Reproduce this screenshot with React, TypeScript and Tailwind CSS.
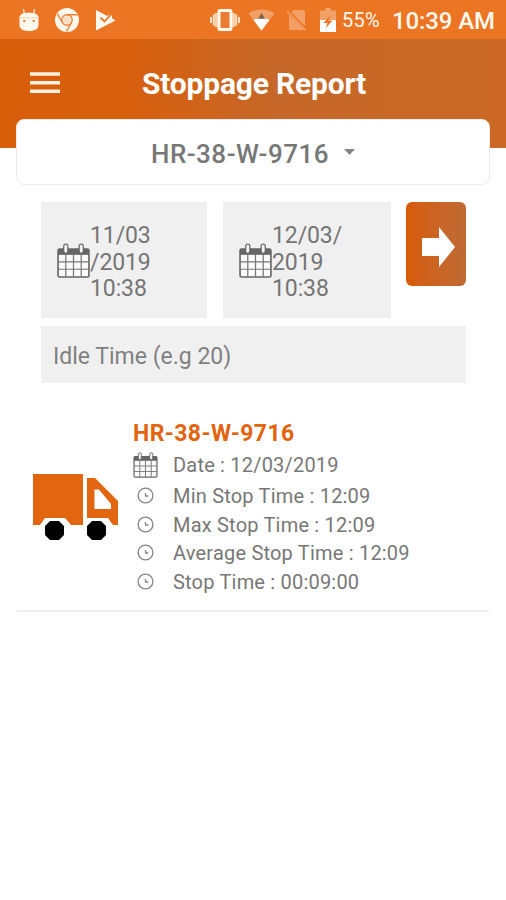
import { Fragment } from 'react'

const details = [
  { label: 'Min Stop Time', value: '12:09' },
  { label: 'Max Stop Time', value: '12:09' },
  { label: 'Average Stop Time', value: '12:09' },
  { label: 'Stop Time', value: '00:09:00' },
]

function AndroidIcon() {
  return (
    <svg width="22" height="24" viewBox="0 0 22 24" fill="#fff8ee">
      <path d="M5.500 1.500l.8 4M16.500 1.500l-.8 4" stroke="#fbd3b0" strokeWidth="1.600" strokeLinecap="round" />
      <path d="M1.500 8.500C3 5.700 6 4.800 11 4.800s8 .9 9.500 3.700V17c0 3.800-3 6-9.500 6s-9.500-2.200-9.500-6z" />
      <path d="M1.500 9.800h19" stroke="#f8c79d" strokeWidth=".8" />
      <circle cx="6.300" cy="13" r="1.200" fill="#e8833b" />
      <circle cx="15.700" cy="13" r="1.200" fill="#e8833b" />
    </svg>
  )
}

function ChromeIcon() {
  return (
    <svg width="24" height="24" viewBox="0 0 24 24">
      <circle cx="12" cy="12" r="12" fill="#fff8ee" />
      <g fill="none" stroke="#ec8239" strokeWidth="1.400">
        <circle cx="12" cy="12" r="5.200" />
        <path d="M12 6.800H22.500M7.500 14.600L2.300 5.600M16.500 14.600L11.300 23.500" />
      </g>
      <circle cx="12" cy="12" r="3.600" fill="#fbdcc0" />
    </svg>
  )
}

function PlayCheckIcon() {
  return (
    <svg width="21" height="22" viewBox="0 0 21 22">
      <path d="M1 1l9 4.800L12 7l3.500-2 1.500 1.500v2.800l3.500 2.200L1 21.500z" fill="#fff8ee" />
      <path d="M5.500 8.500l4 4 7.500-8" fill="none" stroke="#ec7524" strokeWidth="1.800" />
    </svg>
  )
}

function VibrateIcon() {
  return (
    <svg width="30" height="24" viewBox="0 0 30 24">
      <path d="M1 9v6M3.800 6.500v11M26.200 6.500v11M29 9v6" stroke="#fde3cb" strokeWidth="2" />
      <path d="M6.200 5v14M23.800 5v14" stroke="#fbd0a8" strokeWidth="3" />
      <rect x="9" y="2.500" width="12" height="19" rx="1" fill="#e97d31" stroke="#fff8ee" strokeWidth="3" />
    </svg>
  )
}

function WifiIcon() {
  return (
    <svg width="27" height="22" viewBox="0 0 27 22">
      <path d="M.5 4.500C8-1 19-1 26.500 4.500L13.500 21.500z" fill="#f3a067" />
      <path d="M5.300 10.800C10 9 17 9 21.700 10.800L13.500 21.500z" fill="#fff" />
      <path d="M10 9.800L13.500 4l3.500 5.800z" fill="#7d6349" />
    </svg>
  )
}

function NoSimIcon() {
  return (
    <svg width="21" height="22" viewBox="0 0 21 22">
      <path d="M7.500 1H17q2 0 2 2v14L5.500 3.500zM3 5.500l14.500 14.500q0 1-1 1H4q-1 0-1-1z" fill="#f3a067" />
      <path d="M1 2l18.500 19" stroke="#f3a067" strokeWidth="1.500" />
    </svg>
  )
}

function BatteryIcon() {
  return (
    <svg width="16" height="24" viewBox="0 0 16 24">
      <path d="M5 0h6v2.500h5V12H0V2.500h5z" fill="#f3a067" />
      <path d="M0 12h16v12H0z" fill="#fff" />
      <path d="M10.500 7L3.500 15h4L5.500 20.500l7-8h-4z" fill="#ec7524" />
    </svg>
  )
}

function CalendarIcon({ className = '' }: { className?: string }) {
  return (
    <svg className={className} viewBox="0 0 32 34" fill="none">
      <rect x="1" y="6" width="30" height="27" rx="1.500" fill="#fafafa" stroke="#666" strokeWidth="1.600" />
      <path d="M1 6h30v5.500H1z" fill="#666" />
      <path d="M1 18.300h30M1 25.500h30M8.500 11v22M16 11v22M23.500 11v22" stroke="#777" strokeWidth="1.200" />
      <rect x="6.500" y="1" width="4" height="9" rx="2" fill="#f5f5f5" stroke="#666" strokeWidth="1.200" />
      <rect x="21.500" y="1" width="4" height="9" rx="2" fill="#f5f5f5" stroke="#666" strokeWidth="1.200" />
    </svg>
  )
}

function ClockIcon() {
  return (
    <svg width="18" height="18" viewBox="0 0 18 18" fill="none" stroke="#858585" strokeWidth="1.300">
      <circle cx="8.500" cy="8.500" r="7.400" />
      <path d="M8.500 6v3h2.800" />
    </svg>
  )
}

function TruckIcon() {
  return (
    <svg width="86" height="68" viewBox="0 0 86 68">
      <path d="M0 0h50v51H38l-6-7H12l-5 7H0z" fill="#e2650f" />
      <path fillRule="evenodd" d="M54 4h8l23 23v24h-5l-5-7H54zM61.500 15.500V35H78v-5L66 15.500z" fill="#e2650f" />
      <path d="M17 47h9l5 5v9l-5 5h-9l-5-5v-9zM59 47h9l5 5v9l-5 5h-9l-5-5v-9z" fill="#000" />
    </svg>
  )
}

function DateBox({ lines, className = '' }: { lines: string[], className?: string }) {
  return (
    <div className={`flex h-[116px] items-center bg-[#f0f0f0] pl-4 ${className}`}>
      <CalendarIcon className="h-[35px] w-[33px] shrink-0" />
      <p className="pt-1.5 text-[23px] leading-[26.500px] tracking-[-0.1px] text-[#757575]">
        {lines.map((line, i) => (
          <Fragment key={line}>
            {i > 0 && <br />}
            {line}
          </Fragment>
        ))}
      </p>
    </div>
  )
}

export default function App() {
  return (
    <div className="h-[900px] w-[506px] overflow-hidden bg-white font-['Roboto',sans-serif]">
      <div className="flex h-[39px] items-center bg-[#ec7523] pl-[18px] text-[#fff8ee]">
        <AndroidIcon />
        <div className="ml-[15px] flex"><ChromeIcon /></div>
        <div className="ml-4 flex"><PlayCheckIcon /></div>
        <div className="ml-[94px] flex"><VibrateIcon /></div>
        <div className="ml-2 flex"><WifiIcon /></div>
        <div className="ml-[11px] flex"><NoSimIcon /></div>
        <div className="ml-[13px] flex"><BatteryIcon /></div>
        <span className="ml-1.5 w-[50px] text-[20px] tracking-[0.2px]">55%</span>
        <span className="pt-0.5 text-[24px] font-medium tracking-[-0.1px] whitespace-nowrap">10:39 AM</span>
      </div>

      <header className="flex h-[109px] bg-[linear-gradient(90deg,#d85e0a_0%,#d85f0c_24%,#c66829_54%,#cb6825_100%)] pl-[30px]">
        <svg className="mt-8" width="30" height="24" viewBox="0 0 30 24" stroke="#fff0e2" strokeWidth="3.400">
          <path d="M0 3h30M0 11.700h30M0 20.200h30" />
        </svg>
        <h1 className="mt-[25px] ml-[82px] text-[30px] leading-10 font-bold tracking-[-0.2px] whitespace-nowrap text-white">Stoppage Report</h1>
      </header>

      <div className="relative mx-4 -mt-[29px] flex h-[66px] items-center justify-center gap-[15px] rounded-lg border border-[#ececec] bg-white pt-1">
        <span className="text-[26px] font-medium tracking-[0.5px] text-[#777]">HR-38-W-9716</span>
        <svg className="-mt-1" width="11" height="6" viewBox="0 0 11 6" fill="#858585"><path d="M0 0h11L5.500 6z" /></svg>
      </div>

      <div className="mt-[17px] flex items-start pl-[41px]">
        <DateBox className="w-[166px]" lines={['11/03', '/2019', '10:38']} />
        <DateBox className="ml-4 w-[168px]" lines={['12/03/', '2019', '10:38']} />
        <button className="ml-[15px] flex h-[84px] w-[60px] items-center justify-center rounded-md bg-linear-to-r from-[#d75b05] to-[#bf6b34]">
          <svg className="mt-1.5 ml-1" width="33" height="40" viewBox="0 0 33 40" fill="#fff">
            <path d="M0 11h17V0l16 20-16 20V29H0z" />
          </svg>
        </button>
      </div>
      <div className="mt-2 ml-[41px] flex h-[57px] w-[425px] items-center bg-[#f0f0f0] pt-[5px] pl-3 text-[23px] text-[#808080]">Idle Time (e.g 20)</div>

      <div className="mx-[17px] mt-[33px] flex h-[196px] border-b-2 border-[#efefef] pl-4">
        <div className="mt-[58px]"><TruckIcon /></div>
        <div className="ml-3.5 text-[20px] tracking-[0.2px] text-[#777]">
          <h2 className="pt-px text-[23px] leading-[34px] font-bold tracking-[0.4px] text-[#e2640f]">HR-38-W-9716</h2>
          <div className="flex h-[28px] items-center">
            <CalendarIcon className="mr-[15px] h-[26px] w-[25px]" />
            <span>Date : 12/03/2019</span>
          </div>
          <div className="pt-[3px]">
            {details.map(d => (
              <div key={d.label} className="flex h-[28.500px] items-center">
                <div className="mr-[18px] ml-1"><ClockIcon /></div>
                <span>{d.label} : {d.value}</span>
              </div>
            ))}
          </div>
        </div>
      </div>
    </div>
  )
}
